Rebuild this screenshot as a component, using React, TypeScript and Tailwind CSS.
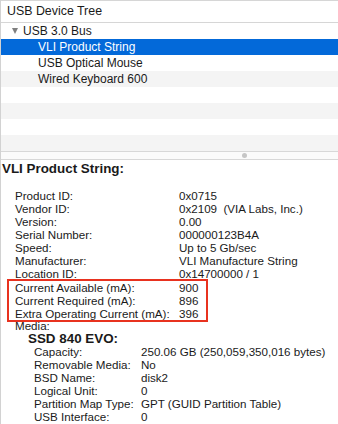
const FONT = "font-['Liberation_Sans',Arial,sans-serif]";

type Row = { label: string; value: string };

const TREE = [
  { label: "VLI Product String", selected: true },
  { label: "USB Optical Mouse", selected: false },
  { label: "Wired Keyboard 600", selected: false },
];

const TOP_FIELDS: Row[] = [
  { label: "Product ID:", value: "0x0715" },
  { label: "Vendor ID:", value: "0x2109  (VIA Labs, Inc.)" },
  { label: "Version:", value: "0.00" },
  { label: "Serial Number:", value: "000000123B4A" },
  { label: "Speed:", value: "Up to 5 Gb/sec" },
  { label: "Manufacturer:", value: "VLI Manufacture String" },
  { label: "Location ID:", value: "0x14700000 / 1" },
];

const POWER_FIELDS: Row[] = [
  { label: "Current Available (mA):", value: "900" },
  { label: "Current Required (mA):", value: "896" },
  { label: "Extra Operating Current (mA):", value: "396" },
];

const MEDIA_FIELDS: Row[] = [
  { label: "Capacity:", value: "250.06 GB (250,059,350,016 bytes)" },
  { label: "Removable Media:", value: "No" },
  { label: "BSD Name:", value: "disk2" },
  { label: "Logical Unit:", value: "0" },
  { label: "Partition Map Type:", value: "GPT (GUID Partition Table)" },
  { label: "USB Interface:", value: "0" },
];

function Field({ row, labelWidth }: { row: Row; labelWidth: string }) {
  return (
    <div className="flex h-[13px] items-center whitespace-pre">
      <span className={`${labelWidth} shrink-0`}>{row.label}</span>
      <span>{row.value}</span>
    </div>
  );
}

export default function App() {
  return (
    <div className={`${FONT} h-[424px] w-[338px] overflow-hidden border-l border-[#d2d2d2] bg-white text-[11.6px] leading-[13px] text-[#1a1a1a]`}>
      {/* tree header */}
      <div className="flex h-[23px] items-center border-y border-[#d6d6d6] pl-[6px] text-[12.4px]">
        USB Device Tree
      </div>

      {/* tree rows */}
      <div className="flex h-[16px] items-center text-[12px]">
        <span className="ml-[11px] mr-[5px] h-0 w-0 border-x-[3px] border-t-[6px] border-x-transparent border-t-[#7f7f7f]" />
        <span>USB 3.0 Bus</span>
      </div>
      {TREE.map((item, i) => (
        <div
          key={item.label}
          className={`flex h-[16px] items-center pl-[37px] text-[12px] ${
            item.selected ? "bg-[#0369d9] text-white" : i % 2 === 0 ? "bg-[#f4f4f4]" : "bg-white"
          }`}
        >
          {item.label}
        </div>
      ))}
      {[0, 1, 2, 3].map((i) => (
        <div key={i} className={`h-[16px] ${i % 2 === 0 ? "bg-white" : "bg-[#f4f4f4]"}`} />
      ))}

      {/* split view divider */}
      <div className="flex h-[9px] items-center justify-center border-y border-[#d8d8d8] bg-[#fbfbfb] pl-[150px]">
        <span className="h-[5px] w-[5px] rounded-full bg-[#c6c6c6]" />
      </div>

      {/* details */}
      <div className="pt-[2px]">
        <div className="h-[13px] pl-[1px] text-[13.4px] font-bold">VLI Product String:</div>
        <div className="h-[14px]" />
        <div className="pl-[14px]">
          {TOP_FIELDS.map((row) => (
            <Field key={row.label} row={row} labelWidth="w-[164px]" />
          ))}
        </div>
        <div className="-mt-[1px] -mb-[3px] ml-[6px] w-[201px] border-2 border-[#e8321f] pl-[6px]">
          {POWER_FIELDS.map((row) => (
            <Field key={row.label} row={row} labelWidth="w-[164px]" />
          ))}
        </div>
        <div className="pl-[14px]">
          <div className="h-[13px]">Media:</div>
          <div className="h-[13px] pl-[13px] text-[13.4px] font-bold">SSD 840 EVO:</div>
          <div className="pl-[19px]">
            {MEDIA_FIELDS.map((row) => (
              <Field key={row.label} row={row} labelWidth="w-[107px]" />
            ))}
          </div>
        </div>
      </div>
    </div>
  );
}
